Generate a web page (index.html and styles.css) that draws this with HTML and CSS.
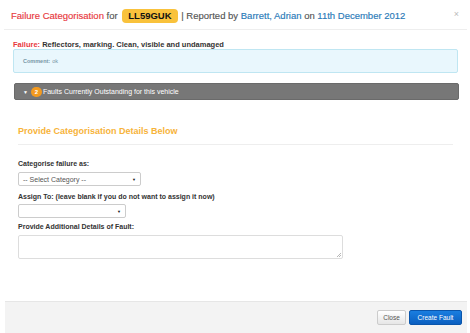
FILE: index.html
```html
<!DOCTYPE html>
<html>
<head>
<meta charset="utf-8">
<link rel="stylesheet" href="styles.css">
</head>
<body>
<div class="modal">
  <div class="modal-header">
    <div class="title"><span class="red">Failure Categorisation</span> <span class="grey">for</span> <span class="plate">LL59GUK</span> <span class="grey">| Reported by</span> <span class="blue">Barrett, Adrian</span> <span class="grey">on</span> <span class="blue">11th December 2012</span></div>
    <span class="close-x">×</span>
  </div>
  <div class="modal-body">
    <div class="failure"><span class="red">Failure:</span> Reflectors, marking. Clean, visible and undamaged</div>
    <div class="comment"><b>Comment:</b> ok</div>
    <div class="faults-bar">
      <span class="tri">▼</span>
      <span class="count">2</span>
      <span class="faults-text">Faults Currently Outstanding for this vehicle</span>
    </div>
    <div class="section">
      <div class="section-title">Provide Categorisation Details Below</div>
      <div class="rule"></div>
      <div class="label l1">Categorise failure as:</div>
      <div class="select s1"><span>-- Select Category --</span><span class="arrow">▼</span></div>
      <div class="label l2">Assign To: (leave blank if you do not want to assign it now)</div>
      <div class="select s2"><span></span><span class="arrow">▼</span></div>
      <div class="label l3">Provide Additional Details of Fault:</div>
      <div class="textarea">
        <svg class="grip" width="5" height="5" viewBox="0 0 5 5"><path d="M5 1 L1 5 M5 3 L3 5" stroke="#999" stroke-width="0.7"/></svg>
      </div>
    </div>
  </div>
  <div class="modal-footer">
    <button class="btn btn-default">Close</button>
    <button class="btn btn-primary">Create Fault</button>
  </div>
</div>
</body>
</html>
```

FILE: styles.css
```css
* { box-sizing: border-box; }
html, body { margin: 0; padding: 0; background: #fff; }
body { font-family: "Liberation Sans", Arial, sans-serif; color: #333; width: 470px; height: 333px; overflow: hidden; }

.modal { width: 461px; margin-left: 5px; display: flex; flex-direction: column; height: 333px; }

.modal-header {
  height: 30px;
  border-bottom: 1px solid #eee;
  display: flex;
  align-items: center;
  justify-content: space-between;
  padding: 0 6px 0 7px;
  margin-left: -1px;
  margin-right: -1px;
}
.title { font-size: 9.5px; white-space: nowrap; padding-top: 2px; -webkit-text-stroke: 0.15px; line-height: 14px; }
.red { color: #e8383d; }
.grey { color: #555; }
.blue { color: #2a7ab8; }
.plate {
  display: inline-block;
  background: #f9c23c;
  color: #111;
  font-weight: bold;
  padding: 0 6px;
  line-height: 14px;
  border-radius: 4px;
  margin: 0 1px 0 2px;
  -webkit-text-stroke: 0;
}
.close-x { color: #bbb; font-size: 9px; margin-top: -1px; margin-right: 2px; }

.modal-body { padding: 0 8px; flex: 1; }
.failure { font-size: 7.5px; font-weight: bold; margin-top: 10px; height: 9px; line-height: 9px; }
.comment {
  margin-top: 0px;
  height: 24px;
  background: #e9f7fd;
  border: 1px solid #bfe6f2;
  border-radius: 2px;
  font-size: 5.5px;
  color: #7796a6;
  padding: 0 0 0 9px;
  display: flex;
  align-items: center;
}
.comment b { margin-right: 2px; }

.faults-bar {
  margin-top: 10px;
  margin-left: 1px;
  margin-right: -1px;
  height: 17px;
  background: #777;
  border: 1px solid #6a6a6a;
  border-radius: 2px;
  display: flex;
  align-items: center;
  padding-left: 8px;
  color: #fff;
  font-size: 7px;
}
.tri { font-size: 5px; margin-right: 3px; }
.count {
  background: #f39a1f;
  color: #fff;
  font-weight: bold;
  font-size: 6px;
  border-radius: 5px;
  width: 11px;
  height: 10px;
  display: flex;
  align-items: center;
  justify-content: center;
  margin-right: 1px;
}

.section { padding: 0 5px; }
.section-title { margin-top: 26px; font-size: 9px; font-weight: bold; color: #f7b33a; height: 10px; line-height: 10px; }
.rule { margin-top: 8px; border-top: 1px solid #eee; }
.label { font-size: 7px; font-weight: bold; color: #333; height: 8px; line-height: 8px; }
.l1 { margin-top: 15px; }
.l2 { margin-top: 7px; }
.l3 { margin-top: 5px; }
.select {
  height: 14px;
  border: 1px solid #ccc;
  border-radius: 2px;
  display: flex;
  align-items: center;
  justify-content: space-between;
  padding: 0 4px;
  font-size: 7px;
  color: #555;
}
.s1 { width: 123px; margin-top: 4px; }
.s2 { width: 108px; margin-top: 3px; }
.arrow { font-size: 4px; color: #111; }
.textarea {
  margin-top: 4px;
  width: 325px;
  height: 24px;
  border: 1px solid #ddd;
  border-radius: 2px;
  position: relative;
}
.grip { position: absolute; right: 1px; bottom: 1px; }

.modal-footer {
  height: 32px;
  background: #f3f3f3;
  border-top: 1px solid #e6e6e6;
  display: flex;
  justify-content: flex-end;
  align-items: center;
  gap: 3px;
  padding: 0 5px 0 0;
  margin-right: -1px;
}
.btn {
  font-family: "Liberation Sans", Arial, sans-serif;
  font-size: 6.5px;
  height: 15px;
  border-radius: 2px;
  padding: 0 5px;
  cursor: pointer;
}
.btn-default { background: linear-gradient(#fff, #e6e6e6); border: 1px solid #ccc; color: #555; width: 29px; }
.btn-primary { background: linear-gradient(#1a7ee0, #0b5fc0); border: 1px solid #0a55ab; color: #fff; width: 53px; }
```
